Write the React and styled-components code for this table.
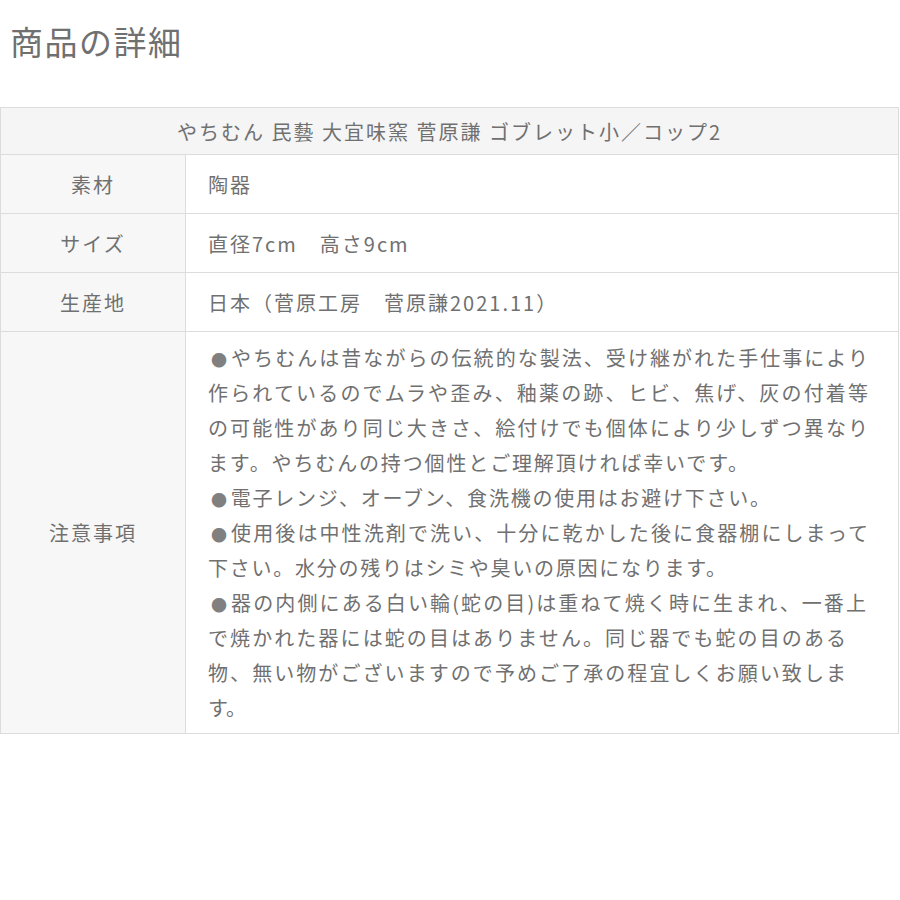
import styled, { createGlobalStyle } from 'styled-components'

const GlobalStyle = createGlobalStyle`
  body {
    margin: 0;
    background: #fff;
    font-family: "Noto Sans CJK JP", "Noto Sans", sans-serif;
    color: #707070;
  }
`

// each line of the notes, with the width it fills in the original layout
const notes = [
  { bullet: true, text: 'やちむんは昔ながらの伝統的な製法、受け継がれた手仕事により', width: 660 },
  { text: '作られているのでムラや歪み、釉薬の跡、ヒビ、焦げ、灰の付着等', width: 660 },
  { text: 'の可能性があり同じ大きさ、絵付けでも個体により少しずつ異なり', width: 660 },
  { text: 'ます。やちむんの持つ個性とご理解頂ければ幸いです。', width: 540 },
  { bullet: true, text: '電子レンジ、オーブン、食洗機の使用はお避け下さい。', width: 562 },
  { bullet: true, text: '使用後は中性洗剤で洗い、十分に乾かした後に食器棚にしまって', width: 660 },
  { text: '下さい。水分の残りはシミや臭いの原因になります。', width: 518 },
  { bullet: true, text: '器の内側にある白い輪(蛇の目)は重ねて焼く時に生まれ、一番上', width: 658 },
  { text: 'で焼かれた器には蛇の目はありません。同じ器でも蛇の目のある', width: 638 },
  { text: '物、無い物がございますので予めご了承の程宜しくお願い致しま', width: 638 },
  { text: 'す。' },
]

const rows = [
  { label: '素材', value: '陶器' },
  { label: 'サイズ', value: '直径7cm　高さ9cm' },
  { label: '生産地', value: '日本（菅原工房　菅原謙2021.11）' },
]

const App = () =>
  <>
    <GlobalStyle />
    <Page>
      <Title>商品の詳細</Title>
      <Table>
        <tbody>
          <tr>
            <Heading colSpan={2}>やちむん 民藝 大宜味窯 菅原謙 ゴブレット小／コップ2</Heading>
          </tr>
          {rows.map(row =>
            <tr key={row.label}>
              <Label>{row.label}</Label>
              <Value>{row.value}</Value>
            </tr>
          )}
          <tr>
            <Label>注意事項</Label>
            <Value $tall>
              {notes.map((line, index) =>
                <Line key={index} $width={line.width}>
                  {line.bullet && <Bullet>●</Bullet>}
                  {line.text}
                </Line>
              )}
            </Value>
          </tr>
        </tbody>
      </Table>
    </Page>
  </>

const Page = styled.div`
  width: 900px;
  padding-top: 17px;
`

const Title = styled.h1`
  margin: 0 0 42px 10px;
  font-size: 33px;
  line-height: 48px;
  font-weight: 400;
  color: #707070;
  letter-spacing: 1.5px;
`

const Table = styled.table`
  width: 899px;
  border-collapse: collapse;
  font-size: 20px;
  color: #707070;

  td, th {
    border: 1px solid #dcdcdc;
  }
`

const Heading = styled.th`
  height: 46px;
  padding: 0;
  background: #f5f5f5;
  font-weight: 400;
  text-align: center;
  letter-spacing: 2px;
`

const Label = styled.td`
  width: 184px;
  padding: 0;
  background: #f7f7f7;
  text-align: center;
  vertical-align: middle;
  letter-spacing: 2px;
`

const Value = styled.td`
  height: ${props => props.$tall ? 'auto' : '58px'};
  padding: ${props => props.$tall ? '8px 10px 8px 22px' : '0 22px'};
  background: #fff;
  vertical-align: middle;
  letter-spacing: 2px;
`

const Line = styled.div`
  width: ${props => props.$width ? `${props.$width}px` : 'auto'};
  height: 35px;
  line-height: 35px;
  letter-spacing: 0;
  white-space: nowrap;
  text-align: ${props => props.$width ? 'justify' : 'left'};
  text-align-last: ${props => props.$width ? 'justify' : 'left'};
`

const Bullet = styled.span`
  padding: 0 2px 0 3px;
  font-size: 16px;
  line-height: 0;
  color: #808080;
`

export default App
